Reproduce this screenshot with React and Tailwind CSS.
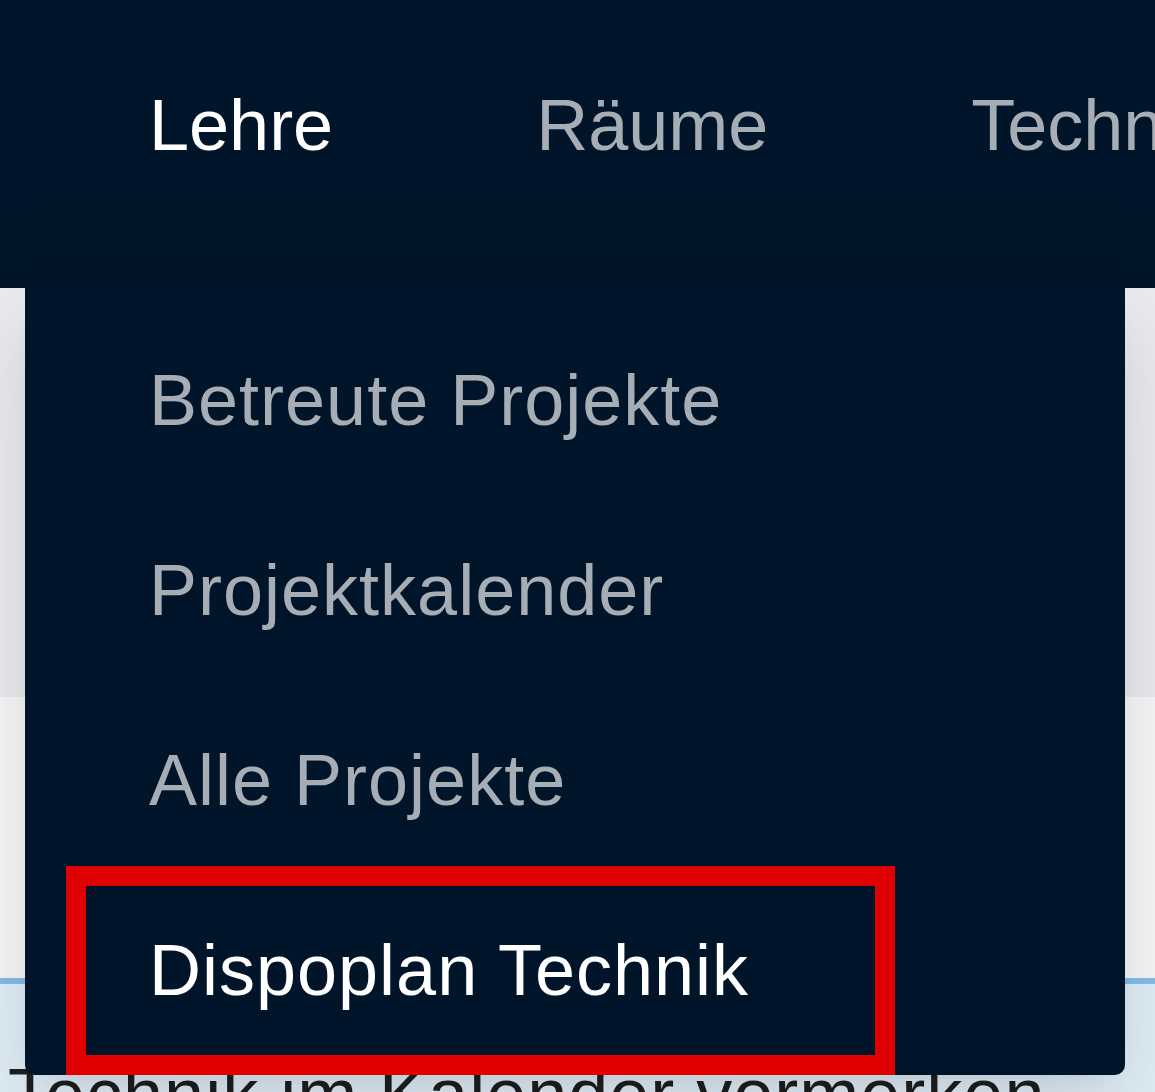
const navItems = [
  { label: 'Lehre', active: true },
  { label: 'Räume' },
  { label: 'Technik' },
];

const menuItems = [
  { label: 'Betreute Projekte' },
  { label: 'Projektkalender' },
  { label: 'Alle Projekte' },
  { label: 'Dispoplan Technik', active: true },
];

export default function App() {
  return (
    <div className="relative w-[1155px] h-[1092px] overflow-hidden bg-[#f0f2f5] font-['Liberation_Sans',Arial,sans-serif]">
      <header className="h-[288px] bg-[#001529] flex pl-[149px] gap-[203px] whitespace-nowrap">
        {navItems.map((item) => (
          <div
            key={item.label}
            className={`pt-[30px] text-[72px] leading-[190px] ${item.active ? 'text-white' : 'text-[#a6adb4]'}`}
          >
            {item.label}
          </div>
        ))}
      </header>

      <main>
        <div className="h-[409px] bg-[#eceef1]" />
        <div className="h-[281px] bg-[#fafafa]" />
        <div className="border-t-[6px] border-[#86c1ed] bg-[#e3f1fb] pt-[56px] pl-[8px] h-[300px]">
          <p className="text-[72px] leading-normal tracking-[1px] text-[#1f1f1f] whitespace-nowrap">
            Technik im Kalender vormerken
          </p>
        </div>
      </main>

      {/* open submenu */}
      <div className="absolute left-[25px] top-[288px] w-[1100px] h-[787px] bg-[#001529] rounded-b-[10px] pt-[17px] shadow-[0_30px_80px_0_rgba(0,0,0,0.08),0_15px_30px_-20px_rgba(0,0,0,0.12),0_45px_140px_40px_rgba(0,0,0,0.05)]">
        {menuItems.map((item) => (
          <div
            key={item.label}
            className={`h-[190px] pl-[124px] text-[72px] leading-[190px] tracking-[1px] whitespace-nowrap ${item.active ? 'text-white' : 'text-[#a6adb4]'}`}
          >
            {item.label}
          </div>
        ))}
      </div>

      {/* highlight annotation */}
      <div className="absolute left-[66px] top-[866px] w-[829px] h-[209px] border-[20px] border-[#e00000]" />
    </div>
  );
}
